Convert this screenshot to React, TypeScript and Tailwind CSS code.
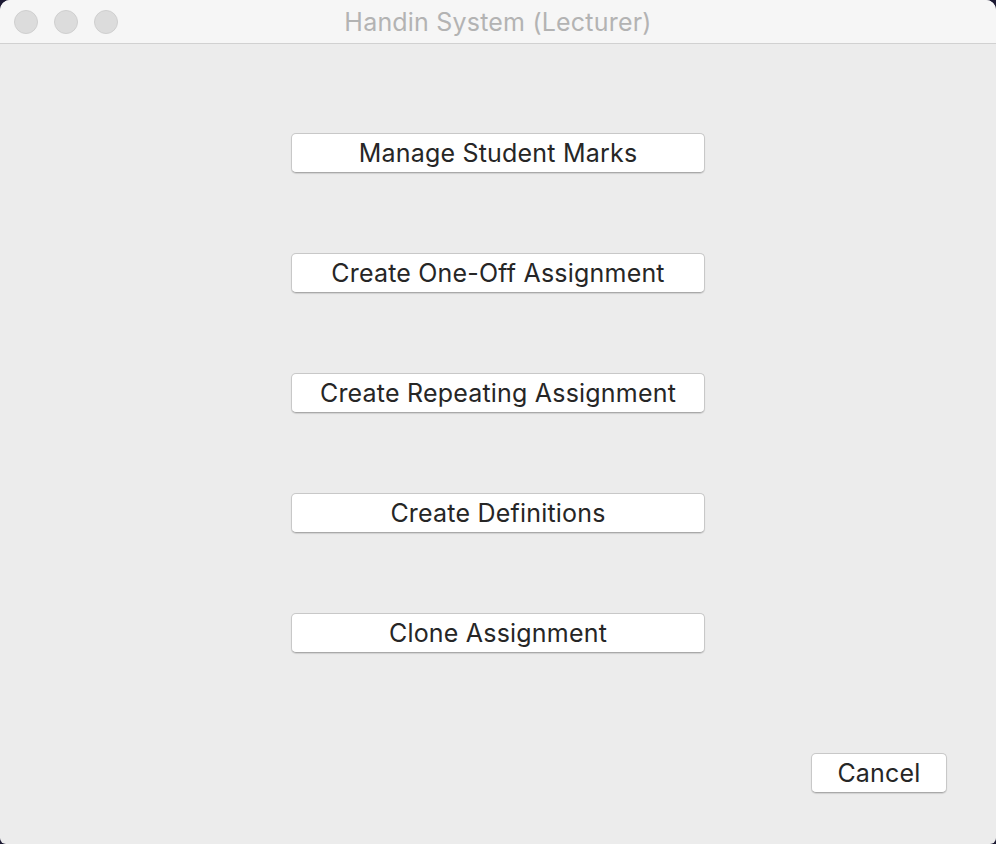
const actions = [
  "Manage Student Marks",
  "Create One-Off Assignment",
  "Create Repeating Assignment",
  "Create Definitions",
  "Clone Assignment",
];

const MacButton = ({ label, className = "" }: { label: string; className?: string }) => (
  <button
    className={`h-[40px] rounded-[5px] bg-white border border-[#c8c8c8] border-b-[#a9a9a9] shadow-[0_1px_1px_rgba(0,0,0,0.12)] text-[25px] tracking-[0.2px] text-[#262626] leading-none ${className}`}
  >
    {label}
  </button>
);

const App = () => {
  return (
    <div
      className="w-[996px] h-[844px] bg-[#1c1a33]"
      style={{ fontFamily: "Inter, 'Liberation Sans', sans-serif" }}
    >
      <div className="w-full h-full flex flex-col rounded-t-[10px] rounded-b-[6px] overflow-hidden bg-[#ececec]">
        <div className="h-[44px] shrink-0 bg-[#f6f6f6] border-b border-[#d1d1d1] flex items-center relative">
          <div className="flex gap-[16px] pl-[14px]">
            <span className="w-[24px] h-[24px] rounded-full bg-[#dcdcdc] border border-[#cfcfcf]" />
            <span className="w-[24px] h-[24px] rounded-full bg-[#dcdcdc] border border-[#cfcfcf]" />
            <span className="w-[24px] h-[24px] rounded-full bg-[#dcdcdc] border border-[#cfcfcf]" />
          </div>
          <div className="absolute inset-0 pt-[3px] flex items-center justify-center text-[25px] tracking-[0.2px] text-[#b3b3b3]">
            Handin System (Lecturer)
          </div>
        </div>

        <div className="flex-1 flex flex-col">
          <div className="flex flex-col items-center gap-[80px] pt-[89px]">
            {actions.map((a) => (
              <MacButton key={a} label={a} className="w-[414px]" />
            ))}
          </div>
          <div className="flex justify-end pr-[49px] pt-[100px]">
            <MacButton label="Cancel" className="w-[136px]" />
          </div>
        </div>
      </div>
    </div>
  );
};

export default App;
